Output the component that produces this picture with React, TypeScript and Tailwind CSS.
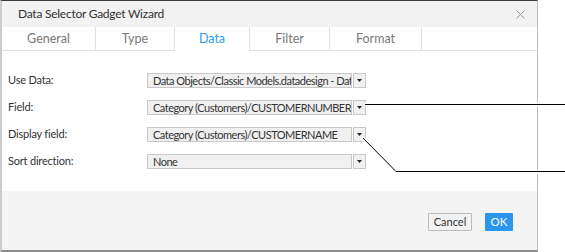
import React from "react";

const font = { fontFamily: "Lato, 'Noto Sans', sans-serif" };

function Select({ value }: { value: string }) {
  return (
    <div className="flex items-center h-[15px] gap-[1px]">
      <div className="w-[205px] h-[15px] bg-[#f0f0f0] border border-[#c8c8c8] pl-[5px] pr-[1px] overflow-hidden whitespace-nowrap text-[11px] tracking-[-0.5px] leading-[13px] text-[#333]">
        {value}
      </div>
      <div className="w-[13px] h-[15px] bg-[#f0f0f0] border border-[#c8c8c8] flex items-center justify-center">
        <svg width="5" height="3" viewBox="0 0 5 3">
          <path d="M0 0H5L2.5 3Z" fill="#222" />
        </svg>
      </div>
    </div>
  );
}

const tabs = [
  { name: "General", w: 94 },
  { name: "Type", w: 79 },
  { name: "Data", w: 75, active: true },
  { name: "Filter", w: 80 },
  { name: "Format", w: 92 },
];

const rows = [
  ["Use Data:", "Data Objects/Classic Models.datadesign - Data Objects"],
  ["Field:", "Category (Customers)/CUSTOMERNUMBER"],
  ["Display field:", "Category (Customers)/CUSTOMERNAME"],
  ["Sort direction:", "None"],
];

export default function App() {
  return (
    <div className="relative w-[565px] h-[252px] bg-white overflow-hidden" style={font}>
      <div className="w-[538px] h-[252px] flex flex-col border-t border-t-[#3a3a3a] border-l-2 border-l-[#cccccc] border-r border-r-[#bdbdbd] border-b-2 border-b-[#8c8c8c]">
        <div className="h-[26px] bg-[#f2f2f2] flex items-center justify-between pl-[16px] pr-[12px]">
          <span className="text-[12px] tracking-[-0.25px] text-[#333]">Data Selector Gadget Wizard</span>
          <svg width="9" height="9" viewBox="0 0 9 9">
            <path d="M0.5 0.5L8.5 8.5M8.5 0.5L0.5 8.5" stroke="#9a9a9a" strokeWidth="1" />
          </svg>
        </div>
        <div className="h-[24px] flex border-b border-[#e2e2e2] bg-white">
          {tabs.map((t) => (
            <div
              key={t.name}
              className={
                "h-[24px] flex items-center justify-center border-r border-[#e2e2e2] text-[12.5px] pt-[1px] " +
                (t.active ? "text-[#2d9cf0] bg-white" : "text-[#777]")
              }
              style={{ width: t.w }}
            >
              {t.name}
            </div>
          ))}
        </div>
        <div className="h-[140px] bg-white pt-[22px] pl-[6px] flex flex-col gap-[12px]">
          {rows.map(([label, value]) => (
            <div key={label} className="flex items-center h-[15px]">
              <div className="w-[139px] text-[11px] tracking-[-0.2px] text-[#333]">{label}</div>
              <Select value={value} />
            </div>
          ))}
        </div>
        <div className="flex-1 bg-[#f4f4f4] flex items-start justify-end pt-[22px] pr-[24px] gap-[13px]">
          <button className="w-[44px] h-[18px] bg-[#f3f3f3] border border-[#bcbcbc] text-[11px] text-[#333] leading-[16px] rounded-[1px]">
            Cancel
          </button>
          <button className="w-[28px] h-[18px] bg-[#2c96ef] text-[11.5px] text-white leading-[18px] rounded-[1px]">
            OK
          </button>
        </div>
      </div>
      <svg className="absolute top-0 left-0 pointer-events-none" width="565" height="252">
        <polyline points="365,104.5 565,104.5" fill="none" stroke="#fff" strokeWidth="4" />
        <polyline points="363,138 396,171.5 565,171.5" fill="none" stroke="#fff" strokeWidth="4" />
        <polyline points="365,104.5 565,104.5" fill="none" stroke="#000" strokeWidth="1" />
        <polyline points="363,138 396,171.5 565,171.5" fill="none" stroke="#000" strokeWidth="1" />
      </svg>
    </div>
  );
}
